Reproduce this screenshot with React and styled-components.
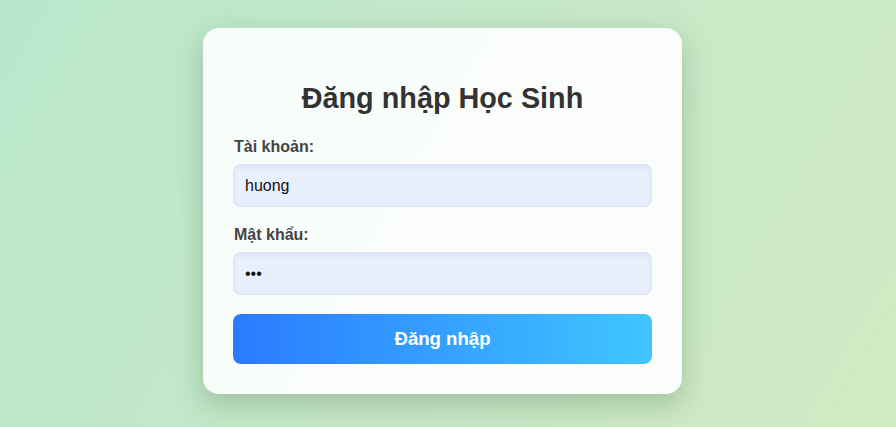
import React from 'react';
import styled, { createGlobalStyle } from 'styled-components';

const GlobalStyle = createGlobalStyle`
  html, body {
    margin: 0;
    padding: 0;
  }
  body {
    font-family: "Liberation Sans", Arial, sans-serif;
    background: linear-gradient(120deg, #b9e7cc 0%, #c6e8c8 50%, #d1eac3 100%);
    min-height: 100vh;
  }
`;

const Page = styled.div`
  min-height: 100vh;
  display: flex;
  align-items: center;
  justify-content: center;
  padding: 0 11px 5px 0;
  box-sizing: border-box;
`;

const Card = styled.form`
  width: 479px;
  box-sizing: border-box;
  padding: 30px;
  background: rgba(255, 255, 255, 0.9);
  border-radius: 16px;
  box-shadow: 0 10px 28px rgba(40, 70, 40, 0.25);
`;

const Titulo = styled.h2`
  font-size: 28.8px;
  font-weight: bold;
  color: #333;
  text-align: center;
  margin: 23.9px 0;
`;

const Grupo = styled.div`
  display: flex;
  flex-direction: column;
  margin-bottom: 19px;
`;

const Label = styled.label`
  font-size: 16px;
  font-weight: bold;
  color: #444;
  margin: 0 0 8px 1px;
`;

const Input = styled.input`
  height: 43px;
  box-sizing: border-box;
  padding: 0 11px;
  border: 1px solid #dfe5f1;
  border-radius: 7px;
  background: #e8f0fe;
  box-shadow: inset 0 2px 4px rgba(60, 70, 110, 0.08);
  font: 16px "Liberation Sans", Arial, sans-serif;
  color: #111;
  outline: none;
`;

const Botao = styled.button`
  width: 100%;
  height: 50px;
  border: none;
  border-radius: 8px;
  background: linear-gradient(90deg, #2a7bff 0%, #40c6ff 100%);
  color: #fff;
  font: bold 18.6px "Liberation Sans", Arial, sans-serif;
  cursor: pointer;
`;

export default function App() {
  return (
    <>
      <GlobalStyle />
      <Page>
        <Card onSubmit={e => e.preventDefault()}>
          <Titulo>Đăng nhập Học Sinh</Titulo>
          <Grupo>
            <Label>Tài khoản:</Label>
            <Input type="text" defaultValue="huong" />
          </Grupo>
          <Grupo>
            <Label>Mật khẩu:</Label>
            <Input type="password" defaultValue="abc" />
          </Grupo>
          <Botao type="submit">Đăng nhập</Botao>
        </Card>
      </Page>
    </>
  );
}
